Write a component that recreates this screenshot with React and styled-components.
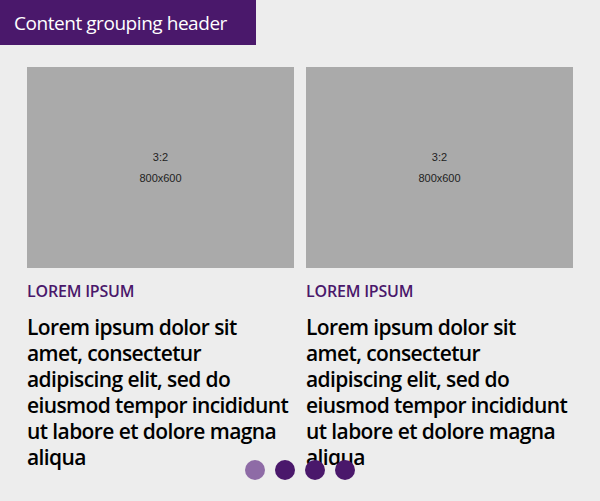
import React from "react";
import styled, { createGlobalStyle } from "styled-components";

const Global = createGlobalStyle`
  html, body { margin: 0; padding: 0; background: #ededed; }
  body { font-family: "Open Sans", "Noto Sans", sans-serif; }
`;

const Page = styled.div`
  position: relative;
  width: 600px;
  height: 501px;
  background: #ededed;
  overflow: hidden;
`;

const Header = styled.div`
  display: inline-flex;
  align-items: center;
  height: 45px;
  width: 256px;
  box-sizing: border-box;
  padding-left: 14px;
  background: #4a186b;
  color: #fff;
  font-size: 19px;
  letter-spacing: -0.45px;
`;

const Cards = styled.div`
  display: grid;
  grid-template-columns: 267px 267px;
  gap: 12px;
  padding: 22px 27px 0;
`;

const Card = styled.div`
  display: flex;
  flex-direction: column;
`;

const Placeholder = styled.div`
  height: 201px;
  background: #aaaaaa;
  display: flex;
  flex-direction: column;
  align-items: center;
  justify-content: center;
  font-family: "Liberation Sans", Arial, sans-serif;
  font-size: 11px;
  color: #222;
  line-height: 21px;
`;

const Label = styled.div`
  margin-top: 13px;
  color: #4a186b;
  font-size: 16px;
  font-weight: 600;
  letter-spacing: -0.2px;
  line-height: 20px;
`;

const Body = styled.div`
  margin-top: 13px;
  max-width: 264px;
  color: #000;
  font-size: 21px;
  font-weight: 600;
  letter-spacing: -0.6px;
  line-height: 26px;
`;

const Dots = styled.div`
  position: absolute;
  left: 245px;
  top: 460px;
  display: flex;
  gap: 10px;
`;

const Dot = styled.span`
  width: 20px;
  height: 20px;
  border-radius: 50%;
  background: ${(p) => (p.$active ? "#8e6ba6" : "#4a186b")};
`;

const text =
  "Lorem ipsum dolor sit amet, consectetur adipiscing elit, sed do eiusmod tempor incididunt ut labore et dolore magna aliqua";

export default function App() {
  return (
    <Page>
      <Global />
      <Header>Content grouping header</Header>
      <Cards>
        {[0, 1].map((i) => (
          <Card key={i}>
            <Placeholder>
              <div>3:2</div>
              <div>800x600</div>
            </Placeholder>
            <Label>LOREM IPSUM</Label>
            <Body>{text}</Body>
          </Card>
        ))}
      </Cards>
      <Dots>
        <Dot $active />
        <Dot />
        <Dot />
        <Dot />
      </Dots>
    </Page>
  );
}
